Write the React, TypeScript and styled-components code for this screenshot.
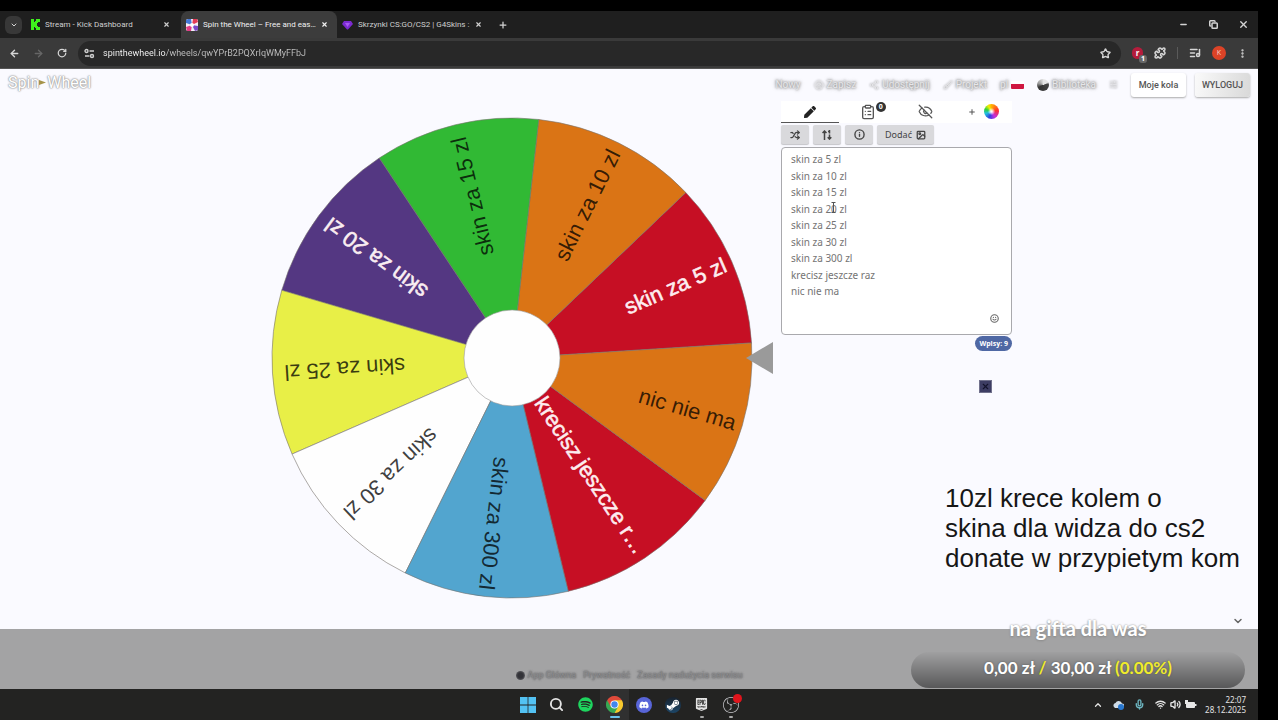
import React from "react";
import styled, { createGlobalStyle, css } from "styled-components";
import {
  ArrowLeft,
  ArrowRight,
  ChevronDown,
  ChevronUp,
  EyeOff,
  ListMusic,
  Mic,
  MoreVertical,
  Plus,
  Puzzle,
  RotateCw,
  Search,
  Smile,
  Star,
  Wifi,
  Volume2,
  X,
  CircleUser,
  Share2,
  Brush,
  Shuffle,
  Image as ImageIcon,
  ClipboardList,
  SlidersHorizontal,
  Info,
  Minus,
  Copy,
} from "lucide-react";
import { FaDiscord, FaPen, FaSpotify, FaSteamSymbol } from "react-icons/fa";
import { SiEpicgames, SiObsstudio } from "react-icons/si";

const GlobalStyle = createGlobalStyle`
  * { box-sizing: border-box; }
  body {
    margin: 0;
    background: #000;
    font-family: "Open Sans", "Noto Sans", sans-serif;
    font-size: 9px;
  }
  button, input, textarea { font: inherit; }
  button { padding: 0; border: 0; background: none; color: inherit; }
  a { color: inherit; text-decoration: none; }
  svg { display: block; flex: none; }
`;

const Screen = styled.div`
  position: relative;
  display: flex;
  flex-direction: column;
  min-height: 100vh;
  padding: 11px 20px 0 0;
`;

/* Browser chrome */

const TabStrip = styled.div`
  display: flex;
  align-items: stretch;
  height: 27px;
  background: #1f1f1f;
  color: #d4d4d4;
`;

const TabMenu = styled.button`
  display: grid;
  place-items: center;
  align-self: center;
  width: 17px;
  height: 18px;
  margin: 0 3px 0 5px;
  border-radius: 6px;
  background: #383838;
`;

const Tab = styled.div<{ $active?: boolean }>`
  display: flex;
  align-items: center;
  gap: 5px;
  width: 156px;
  padding: 0 11px 0 5px;
  border-radius: 8px 8px 0 0;
  background: ${(p) => (p.$active ? "#3c3c3c" : "transparent")};
  color: ${(p) => (p.$active ? "#f0f0f0" : "#cfcfcf")};
`;

const TabTitle = styled.span`
  flex: 1;
  white-space: nowrap;
  font-family: Roboto, sans-serif;
  font-size: 8px;
  line-height: 12px;
`;

const Strut = styled.span`
  flex: 1;
`;

const StripButton = styled.button<{ $narrow?: boolean }>`
  display: grid;
  place-items: center;
  width: ${(p) => (p.$narrow ? 20 : 30)}px;
`;

const Toolbar = styled.div`
  display: flex;
  align-items: center;
  height: 31px;
  padding: 0 10px 0 9px;
  gap: 11px;
  border-bottom: 1px solid #555;
  background: #3a3a3a;
  color: #d6d6d6;
`;

const NavButtons = styled.div`
  display: flex;
  gap: 13px;
`;

const Divider = styled.span`
  width: 1px;
  height: 12px;
  background: #5a5a5a;
`;

const AddressBar = styled.label`
  display: flex;
  flex: 1;
  align-items: center;
  gap: 8px;
  height: 25px;
  padding: 0 10px 0 6px;
  border-radius: 13px;
  background: #282828;
`;

const AddressInput = styled.input`
  flex: 1;
  min-width: 0;
  padding: 0;
  border: 0;
  outline: 0;
  background: linear-gradient(90deg, #ffffff 63px, #c4c4c4 63px);
  background-clip: text;
  color: transparent;
  font-family: Roboto, sans-serif;
  font-size: 9px;
`;

const Extension = styled.button`
  display: grid;
  place-items: center;
  position: relative;
  width: 11px;
  height: 12px;
  border-radius: 6px;
  background: #b51c3c;
  color: #fff;
  font-size: 8px;
  font-weight: 700;
  line-height: 12px;
`;

const ExtensionCount = styled.span`
  position: absolute;
  right: -4px;
  bottom: -4px;
  width: 8px;
  border-radius: 3px;
  background: #686868;
  font-size: 7px;
  line-height: 8px;
`;

const Profile = styled.button`
  width: 14px;
  height: 14px;
  border-radius: 50%;
  background: #dc4327;
  color: #f7cfc5;
  font-size: 7px;
  line-height: 14px;
`;

/* Page */

const Page = styled.div`
  display: flex;
  flex: 1;
  flex-direction: column;
  background: #fafaff;
`;

const Header = styled.header`
  display: flex;
  align-items: center;
  justify-content: space-between;
  height: 31px;
  padding: 0 8px;
`;

const Logo = styled.a`
  display: flex;
  align-items: center;
  padding-bottom: 4px;
  color: #fff;
  font-family: Roboto, sans-serif;
  font-size: 16px;
  line-height: 20px;
  text-shadow: 0 0 1px #999, 0 0 2px #999, 0 0 2px #aaa;
`;

const Nav = styled.nav`
  display: flex;
  align-items: center;
  gap: 13px;
`;

const NavLink = styled.a`
  display: flex;
  align-items: center;
  gap: 3px;
  color: #e6e6e9;
  font-family: Roboto, sans-serif;
  font-size: 10px;
  line-height: 14px;
  text-shadow: 0 0 2px #999, 0 0 3px #999, 0 0 4px #aaa;

  svg { filter: drop-shadow(0 0 1px #888); }
`;

const Flag = styled.span`
  width: 13px;
  height: 8px;
  border-radius: 1px;
  background: linear-gradient(#fff 38%, #cf1740 38%);
`;

const Globe = styled.span`
  width: 12px;
  height: 12px;
  border-radius: 50%;
  background: conic-gradient(#e6e6e6 60deg, #444 80deg, #333 240deg, #999 290deg, #ddd);
`;

const HeaderButton = styled.button<{ $muted?: boolean }>`
  width: 55px;
  height: 24px;
  border-radius: 3px;
  background: ${(p) => (p.$muted ? "linear-gradient(100deg, #fafafa, #d9d9d9)" : "#fff")};
  box-shadow: 0 1px 2px #aaa;
  color: #555;
  font-family: Roboto, sans-serif;
  font-size: 9px;
  font-weight: 500;
`;

const HeaderActions = styled.div`
  display: flex;
  gap: 9px;
`;

const Content = styled.main`
  display: flex;
  flex: 1;
  justify-content: center;
  align-items: flex-start;
  gap: 6px;
  padding: 1px 0 28px 25px;
`;

const WheelDrawing = styled.svg`
  margin-top: 16px;
`;

const SliceLabel = styled.text<{ $light?: boolean }>`
  font-family: "Liberation Sans", Arial, sans-serif;
  font-size: 22px;
  text-anchor: end;
  fill: ${(p) => (p.$light ? "#fff" : "#000")};
  fill-opacity: ${(p) => (p.$light ? 0.94 : 0.76)};
  ${(p) => p.$light && css`stroke: #ffe8ec; stroke-width: 0.6;`}
`;

const Panel = styled.section`
  display: flex;
  flex-direction: column;
  width: 231px;
`;

const PanelTabs = styled.div`
  display: grid;
  grid-template-columns: repeat(4, 1fr);
  height: 22px;
  background: #fff;
  color: #555;
`;

const PanelTab = styled.button<{ $active?: boolean }>`
  display: flex;
  align-items: center;
  justify-content: center;
  gap: 8px;
  position: relative;
  border-bottom: 1px solid ${(p) => (p.$active ? "#555" : "transparent")};
  color: ${(p) => (p.$active ? "#222" : "inherit")};
`;

const TabBadge = styled.span`
  position: absolute;
  top: 1px;
  left: 37px;
  width: 10px;
  height: 10px;
  border-radius: 50%;
  background: #333;
  color: #fff;
  font-size: 7px;
  font-weight: 700;
  line-height: 10px;
`;

const ColorWheel = styled.span`
  width: 15px;
  height: 15px;
  border-radius: 50%;
  background: radial-gradient(#fff 5%, transparent 35%),
    conic-gradient(#ffb000, #ff3030 80deg, #c030e0 150deg, #3040e0 200deg, #20c0e0 250deg, #30d040 290deg, #f0f000 330deg, #ffb000);
`;

const ToolRow = styled.div`
  display: flex;
  gap: 4px;
  padding: 2px 0 3px;
`;

const Tool = styled.button<{ $wide?: boolean }>`
  display: flex;
  align-items: center;
  justify-content: center;
  gap: 4px;
  width: ${(p) => (p.$wide ? 57 : 28)}px;
  height: 19px;
  border-radius: 2px;
  background: #d9d9dc;
  box-shadow: 0 1px 1px #c4c4c8;
  color: #444;
  font-family: "Noto Sans", sans-serif;
  font-size: 9px;
`;

const EntriesBox = styled.div`
  position: relative;
  display: flex;
  height: 188px;
`;

const Entries = styled.textarea`
  flex: 1;
  padding: 3px 9px;
  border: 1px solid #a9a9ad;
  border-radius: 4px;
  outline: 0;
  resize: none;
  background: #fff;
  color: #747474;
  font-family: "Noto Sans", sans-serif;
  font-size: 10px;
  line-height: 1.65;
`;

const EmojiButton = styled.button`
  position: absolute;
  right: 13px;
  bottom: 12px;
  color: #666;
`;

const TextCursor = styled.svg`
  position: absolute;
  left: 50px;
  top: 55px;
`;

const Count = styled.span`
  align-self: flex-end;
  margin-top: 1px;
  padding: 0 4px;
  border-radius: 8px;
  background: #4f68a4;
  color: #fff;
  font-size: 7px;
  font-weight: 700;
  line-height: 15px;
`;

const CloseBox = styled.button`
  display: grid;
  place-items: center;
  align-self: flex-end;
  width: 13px;
  height: 13px;
  margin: 29px 20px 0 0;
  border: 1px solid #71718c;
  background: #3d3d63;
  color: #14142c;
`;

const Expand = styled.button`
  align-self: flex-end;
  margin: -14px 14px 2px 0;
  color: #666;
`;

const Footer = styled.footer`
  display: flex;
  align-items: flex-end;
  justify-content: center;
  gap: 7px;
  height: 60px;
  padding-bottom: 8px;
  background: #a3a3a4;
  color: #8c8c8e;
  font-family: Roboto, sans-serif;
  font-size: 9px;
  line-height: 12px;
  text-shadow: 0 0 2px #606062, 0 0 2px #6c6c6e;
`;

const FooterLink = styled.a`
  display: flex;
  align-items: center;
  gap: 3px;
`;

const Dot = styled.span`
  width: 9px;
  height: 9px;
  border-radius: 50%;
  background: radial-gradient(#333338 40%, #77777b);
`;

/* Stream overlay */

const StreamNote = styled.p`
  position: absolute;
  right: 34px;
  bottom: 147px;
  width: 299px;
  margin: 0;
  color: #161616;
  font-family: "Liberation Sans", Arial, sans-serif;
  font-size: 26px;
  line-height: 30px;
  white-space: nowrap;
`;

const Donation = styled.div`
  position: absolute;
  right: 33px;
  bottom: 32px;
  width: 334px;
  color: #fff;
  font-family: Lato, sans-serif;
  font-weight: 700;
  text-align: center;
`;

const DonationTitle = styled.div`
  margin-bottom: 12px;
  font-size: 20px;
  line-height: 24px;
  text-shadow: 0 0 2px #999, 0 1px 2px #888;
`;

const DonationBar = styled.div`
  padding-bottom: 5px;
  border-radius: 18px;
  background: linear-gradient(#a0a0a1, #7c7c7d 50%, #585859);
  font-size: 17px;
  line-height: 31px;
  text-shadow: 0 0 2px #555;
`;

const Accent = styled.span`
  color: #f0ec2c;
`;

/* Taskbar */

const Taskbar = styled.div`
  display: grid;
  grid-template-columns: 1fr auto 1fr;
  height: 31px;
  background: #232322;
  color: #e4e4e4;
`;

const Apps = styled.div`
  grid-column: 2;
  display: flex;
`;

const AppButton = styled.button<{ $active?: boolean; $running?: boolean }>`
  display: grid;
  place-items: center;
  position: relative;
  width: 29px;
  background: ${(p) => (p.$active ? "#303030" : "transparent")};

  &::after {
    content: "";
    position: absolute;
    bottom: 2px;
    width: ${(p) => (p.$active ? 10 : 4)}px;
    height: 2px;
    border-radius: 1px;
    background: ${(p) => (p.$active ? "#69c3ee" : p.$running ? "#aaa" : "transparent")};
  }
`;

const DiscordDisc = styled.span`
  display: grid;
  place-items: center;
  width: 16px;
  height: 16px;
  border-radius: 50%;
  background: #5865d8;
  color: #fff;
`;

const SteamDisc = styled(DiscordDisc)`
  background: linear-gradient(#18222e, #1c4668);
`;

const RecordDot = styled.span`
  position: absolute;
  top: 5px;
  right: 3px;
  width: 9px;
  height: 9px;
  border-radius: 50%;
  background: #e0141c;
`;

const Tray = styled.div`
  display: flex;
  align-items: center;
  justify-content: flex-end;
  gap: 4px;
  padding-right: 12px;
`;

const TrayGroup = styled.div`
  display: flex;
  align-items: center;
  gap: 10px;
  margin-right: 6px;
`;

const Clock = styled.time`
  margin-left: 4px;
  font-family: "Noto Sans", sans-serif;
  font-size: 8px;
  line-height: 10px;
  text-align: right;
`;

type Slice = { label: string; color: string; light?: boolean; inset?: number };

const slices: Slice[] = [
  { label: "skin za 5 zl", color: "#c60f24", light: true },
  { label: "skin za 10 zl", color: "#da7415", inset: 9 },
  { label: "skin za 15 zl", color: "#31b934", inset: 13 },
  { label: "skin za 20 zl", color: "#543782", light: true, inset: 11 },
  { label: "skin za 25 zl", color: "#e8ef47", inset: 12 },
  { label: "skin za 30 zl", color: "#fefefe", inset: 12 },
  { label: "skin za 300 zl", color: "#52a5cf" },
  { label: "krecisz jeszcze r…", color: "#c60f24", light: true },
  { label: "nic nie ma", color: "#da7415" },
];

const entries = [
  "skin za 5 zl",
  "skin za 10 zl",
  "skin za 15 zl",
  "skin za 20 zl",
  "skin za 25 zl",
  "skin za 30 zl",
  "skin za 300 zl",
  "krecisz jeszcze raz",
  "nic nie ma",
].join("\n");

const CENTER = 241;
const OUTER = 240;
const START = -3.6;
const STEP = 360 / slices.length;

function point(angle: number, radius: number) {
  const a = (angle * Math.PI) / 180;
  return `${CENTER + Math.cos(a) * radius} ${CENTER + Math.sin(a) * radius}`;
}

function Wheel() {
  return (
    <WheelDrawing width="504" height="482" viewBox="0 0 504 482" role="img" aria-label="Koło">
      {slices.map((s, i) => {
        const from = START - i * STEP;
        const to = from - STEP;
        return (
          <path
            key={s.label}
            d={`M${CENTER} ${CENTER} L${point(from, OUTER)} A${OUTER} ${OUTER} 0 0 0 ${point(to, OUTER)} Z`}
            fill={s.color}
            stroke="#77716c"
            strokeOpacity="0.6"
          />
        );
      })}
      {slices.map((s, i) => (
        <SliceLabel
          key={s.label}
          $light={s.light}
          x={OUTER - (s.inset ?? 7)}
          y={7}
          transform={`translate(${CENTER} ${CENTER}) rotate(${START - (i + 0.5) * STEP})`}
        >
          {s.label}
        </SliceLabel>
      ))}
      <circle cx={CENTER} cy={CENTER} r="48" fill="#fefefe" stroke="#999" strokeOpacity="0.6" />
      <path d="M475 241 L502 225 V257 Z" fill="#9a9a9a" />
    </WheelDrawing>
  );
}

function KickIcon() {
  return (
    <svg width="10" height="11" viewBox="0 0 10 11">
      <path d="M1 0h3v3h1V2h1V0h4v3H8v1H7v3h1v1h2v3H6V9H5V8H4v3H1z" fill="#3ef01c" />
    </svg>
  );
}

function WheelFavicon() {
  return (
    <svg width="12" height="12" viewBox="0 0 12 12">
      <rect width="12" height="12" rx="2" fill="#f2eef5" />
      <path d="M6 6 0 4V1l2-1h3z" fill="#4478d8" />
      <path d="M6 6 7 0h4l1 3z" fill="#e33b56" />
      <path d="M6 6 12 7v4l-3 1z" fill="#7a48c8" />
      <path d="M6 6 5 12H1l-1-4z" fill="#e23c86" />
      <circle cx="6" cy="6" r="2" fill="#fff" />
    </svg>
  );
}

function GemIcon() {
  return (
    <svg width="11" height="10" viewBox="0 0 11 10">
      <path d="M2 1h7l2 3-5 5.500h-1L0 4z" fill="#7b2ad0" />
      <path d="M3 3h5l-2.500 4z" fill="#a75af0" />
    </svg>
  );
}

function SiteSettingsIcon() {
  return (
    <svg width="11" height="11" viewBox="0 0 11 11" fill="none" stroke="#d0d0d0" strokeWidth="1.400">
      <circle cx="2.500" cy="3" r="1.500" />
      <path d="M5.500 3H10M1 8h4.500" />
      <circle cx="8" cy="8" r="1.500" />
    </svg>
  );
}

function WindowsIcon() {
  return (
    <svg width="16" height="16" viewBox="0 0 16 16" fill="#53c2f3">
      <path d="M0 0h7.600v7.600H0zM8.400 0H16v7.600H8.400zM0 8.400h7.600V16H0zM8.400 8.400H16V16H8.400z" />
    </svg>
  );
}

function ChromeIcon() {
  return (
    <svg width="17" height="17" viewBox="0 0 24 24">
      <path d="M12 12 1.600 6A12 12 0 0 1 22.400 6z" fill="#e04a3a" />
      <path d="M12 12 22.400 6A12 12 0 0 1 12 24z" fill="#f7c92e" />
      <path d="M12 12v12A12 12 0 0 1 1.600 6z" fill="#37a853" />
      <path d="M12 6h10.400l-5.200 9z" fill="#f7c92e" />
      <path d="M17.200 15 12 24l-5.200-9z" fill="#37a853" />
      <path d="M6.800 15 1.600 6 12 6z" fill="#e04a3a" />
      <circle cx="12" cy="12" r="5.800" fill="#fff" />
      <circle cx="12" cy="12" r="4.500" fill="#4286ee" />
    </svg>
  );
}

function SortIcon() {
  return (
    <svg width="10" height="10" viewBox="0 0 10 10" fill="none" stroke="currentColor" strokeWidth="1.500">
      <path d="M2.500 10V1M0.500 3l2-2 2 2M7.500 0v3.500M7.500 4.500v4.500M5.700 7.300l1.800 1.800 1.800-1.800M6 1.500h1.500" />
    </svg>
  );
}

function CloudIcon() {
  return (
    <svg width="11" height="10" viewBox="0 0 11 10">
      <path d="M1 7a2.500 2.500 0 0 1 1.500-4A3.500 3.500 0 0 1 9 3.500 2 2 0 0 1 9 8H2z" fill="#cfdce8" />
      <circle cx="8" cy="7" r="3" fill="#2877cf" />
    </svg>
  );
}

function BatteryIcon() {
  return (
    <svg width="12" height="9" viewBox="0 0 12 9" fill="#e8e8e8">
      <rect x="1" y="2" width="9" height="6" rx="1" />
      <path d="M10 4h1.500v2H10zM0 0h3v4H0z" />
    </svg>
  );
}

export default function App() {
  return (
    <Screen>
      <GlobalStyle />
      <TabStrip>
        <TabMenu aria-label="Wyszukaj karty"><ChevronDown size={8} strokeWidth={3} /></TabMenu>
        <Tab>
          <KickIcon />
          <TabTitle>Stream - Kick Dashboard</TabTitle>
          <X size={7} strokeWidth={4} />
        </Tab>
        <Tab $active>
          <WheelFavicon />
          <TabTitle>Spin the Wheel – Free and eas…</TabTitle>
          <X size={7} strokeWidth={4} />
        </Tab>
        <Tab>
          <GemIcon />
          <TabTitle>Skrzynki CS:GO/CS2 | G4Skins :</TabTitle>
          <X size={7} strokeWidth={4} />
        </Tab>
        <StripButton $narrow aria-label="Nowa karta"><Plus size={10} strokeWidth={3} /></StripButton>
        <Strut />
        <StripButton aria-label="Minimalizuj"><Minus size={9} strokeWidth={4} /></StripButton>
        <StripButton aria-label="Przywróć"><Copy size={9} strokeWidth={4} /></StripButton>
        <StripButton aria-label="Zamknij"><X size={11} strokeWidth={3} /></StripButton>
      </TabStrip>
      <Toolbar>
        <NavButtons>
          <ArrowLeft size={11} strokeWidth={3} />
          <ArrowRight size={11} strokeWidth={3} color="#666" />
          <RotateCw size={10} strokeWidth={3} />
        </NavButtons>
        <AddressBar>
          <SiteSettingsIcon />
          <AddressInput aria-label="Adres" defaultValue="spinthewheel.io/wheels/qwYPrB2PQXrIqWMyFFbJ" />
          <Star size={11} strokeWidth={3} />
        </AddressBar>
        <Extension aria-label="Rozszerzenie">r<ExtensionCount>1</ExtensionCount></Extension>
        <Puzzle size={12} strokeWidth={3} />
        <Divider />
        <ListMusic size={12} strokeWidth={3} />
        <Profile>K</Profile>
        <MoreVertical size={11} strokeWidth={3} />
      </Toolbar>

      <Page>
        <Header>
          <Logo href="#">
            <span>Spin</span>
            <svg width="8" height="7" viewBox="0 0 8 7"><path d="M0 1l7 2.500L0 6z" fill="#a5934a" /></svg>
            <span>Wheel</span>
          </Logo>
          <Nav>
            <NavLink href="#">Nowy</NavLink>
            <NavLink href="#"><CircleUser size={10} />Zapisz</NavLink>
            <NavLink href="#"><Share2 size={10} />Udostępnij</NavLink>
            <NavLink href="#"><Brush size={10} />Projekt</NavLink>
            <NavLink href="#">pl<Flag /></NavLink>
            <NavLink href="#"><Globe />Biblioteka</NavLink>
            <NavLink href="#"><SlidersHorizontal size={9} /></NavLink>
            <HeaderActions>
              <HeaderButton>Moje koła</HeaderButton>
              <HeaderButton $muted>WYLOGUJ</HeaderButton>
            </HeaderActions>
          </Nav>
        </Header>
        <Content>
          <Wheel />
          <Panel>
            <PanelTabs>
              <PanelTab $active aria-label="Edytuj"><FaPen size={12} /></PanelTab>
              <PanelTab aria-label="Wyniki"><ClipboardList size={16} strokeWidth={2} /><TabBadge>0</TabBadge></PanelTab>
              <PanelTab aria-label="Ukryj"><EyeOff size={15} strokeWidth={2} /></PanelTab>
              <PanelTab aria-label="Kolory"><Plus size={8} strokeWidth={3} /><ColorWheel /></PanelTab>
            </PanelTabs>
            <ToolRow>
              <Tool aria-label="Losuj"><Shuffle size={10} strokeWidth={3} /></Tool>
              <Tool aria-label="Sortuj"><SortIcon /></Tool>
              <Tool aria-label="Informacje"><Info size={11} strokeWidth={3} /></Tool>
              <Tool $wide>Dodać <ImageIcon size={10} strokeWidth={3} /></Tool>
            </ToolRow>
            <EntriesBox>
              <Entries aria-label="Wpisy" spellCheck={false} defaultValue={entries} />
              <TextCursor width="5" height="11" viewBox="0 0 5 11" fill="none" stroke="#555">
                <path d="M0.500 0.500h4M2.500 0.500v10M0.500 10.500h4" />
              </TextCursor>
              <EmojiButton aria-label="Emoji"><Smile size={9} strokeWidth={3} /></EmojiButton>
            </EntriesBox>
            <Count>Wpisy: 9</Count>
            <CloseBox aria-label="Zamknij reklamę"><X size={9} strokeWidth={3} /></CloseBox>
          </Panel>
        </Content>
        <Expand aria-label="Rozwiń"><ChevronDown size={12} strokeWidth={3} /></Expand>
        <Footer>
          <FooterLink href="#"><Dot />App Główna</FooterLink>
          <FooterLink href="#">Prywatność</FooterLink>
          <FooterLink href="#">Zasady nadużycia serwisu</FooterLink>
        </Footer>
      </Page>

      <StreamNote>
        10zl krece kolem o<br />
        skina dla widza do cs2<br />
        donate w przypietym kom
      </StreamNote>
      <Donation>
        <DonationTitle>na gifta dla was</DonationTitle>
        <DonationBar>
          0,00 zł <Accent>/</Accent> 30,00 zł <Accent>(0.00%)</Accent>
        </DonationBar>
      </Donation>

      <Taskbar>
        <Apps>
          <AppButton aria-label="Start"><WindowsIcon /></AppButton>
          <AppButton aria-label="Szukaj"><Search size={15} strokeWidth={3} /></AppButton>
          <AppButton aria-label="Spotify"><FaSpotify size={15} color="#1ed45e" /></AppButton>
          <AppButton $active aria-label="Chrome"><ChromeIcon /></AppButton>
          <AppButton aria-label="Discord"><DiscordDisc><FaDiscord size={10} /></DiscordDisc></AppButton>
          <AppButton aria-label="Steam"><SteamDisc><FaSteamSymbol size={14} /></SteamDisc></AppButton>
          <AppButton $running aria-label="Epic Games"><SiEpicgames size={13} /></AppButton>
          <AppButton $running aria-label="OBS"><SiObsstudio size={16} color="#c8c8cc" /><RecordDot /></AppButton>
        </Apps>
        <Tray>
          <TrayGroup>
            <ChevronUp size={10} strokeWidth={3} />
            <CloudIcon />
            <Mic size={11} strokeWidth={3} color="#6db5c0" />
          </TrayGroup>
          <Wifi size={11} strokeWidth={3} />
          <Volume2 size={11} strokeWidth={3} />
          <BatteryIcon />
          <Clock>22:07<br />28.12.2025</Clock>
        </Tray>
      </Taskbar>
    </Screen>
  );
}
